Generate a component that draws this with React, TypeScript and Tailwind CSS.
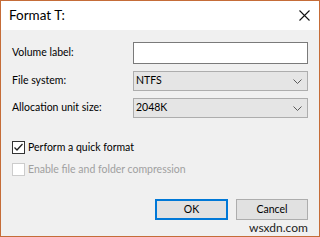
import React from 'react';

const font = { fontFamily: 'Lato, "Noto Sans", sans-serif' };

const Chevron = () => (
  <svg width="9" height="5" viewBox="0 0 9 5" className="text-[#5a5a5a]">
    <path d="M0.5 0.5 L4.5 4.5 L8.5 0.5" fill="none" stroke="currentColor" strokeWidth="1" />
  </svg>
);

const Select = ({ value }: { value: string }) => (
  <div className="h-[20px] bg-[#e5e5e5] border border-[#adadad] flex items-center justify-between pl-[2px] pr-[5px] text-[10.5px] text-black">
    <span>{value}</span>
    <Chevron />
  </div>
);

const Check = ({ checked, disabled }: { checked?: boolean; disabled?: boolean }) => (
  <div
    className={`w-[13px] h-[13px] border bg-white flex items-center justify-center ${
      disabled ? 'border-[#cccccc]' : 'border-[#333333]'
    }`}
  >
    {checked && (
      <svg width="11" height="11" viewBox="0 0 11 11">
        <path d="M1.5 5.5 L4 8 L9.5 2" fill="none" stroke="#222" strokeWidth="1.3" />
      </svg>
    )}
  </div>
);

export default function App() {
  return (
    <div style={font} className="w-[320px] h-[237px] border border-[#c56c38] flex flex-col relative overflow-hidden">
      {/* title bar */}
      <div className="h-[29px] bg-white flex items-center justify-between pl-[8px] pr-[9px] shrink-0">
        <span className="text-[13.5px] text-black">Format T:</span>
        <svg width="11" height="11" viewBox="0 0 11 11">
          <path d="M0.5 0.5 L10.5 10.5 M10.5 0.5 L0.5 10.5" stroke="#111" strokeWidth="1.1" />
        </svg>
      </div>

      {/* body */}
      <div className="flex-1 bg-[#f0f0f0] pl-[11px] pr-[10px] pt-[12px] text-[10.5px] text-black">
        <div className="grid grid-cols-[121px_175px] gap-y-[7px] items-center">
          <span>Volume label:</span>
          <div className="h-[22px] bg-white border border-[#7a7a7a]" />
          <span>File system:</span>
          <Select value="NTFS" />
          <span>Allocation unit size:</span>
          <Select value="2048K" />
        </div>

        <div className="mt-[23px] flex flex-col gap-[9px]">
          <div className="flex items-center gap-[3px] h-[13px]">
            <Check checked />
            <span>Perform a quick format</span>
          </div>
          <div className="flex items-center gap-[3px] h-[13px] text-[#a0a0a0]">
            <Check disabled />
            <span>Enable file and folder compression</span>
          </div>
        </div>

        <div className="mt-[23px] flex justify-end gap-[8px] pr-[1px]">
          <button className="w-[73px] h-[21px] bg-[#e1e1e1] border-2 border-[#0078d7] text-[10.5px] leading-none">
            OK
          </button>
          <button className="w-[72px] h-[21px] bg-[#e1e1e1] border border-[#adadad] text-[10.5px] leading-none">
            Cancel
          </button>
        </div>
      </div>

      <span className="absolute left-[248px] top-[221px] text-[12px] leading-none text-[#222]">wsxdn.com</span>
    </div>
  );
}
